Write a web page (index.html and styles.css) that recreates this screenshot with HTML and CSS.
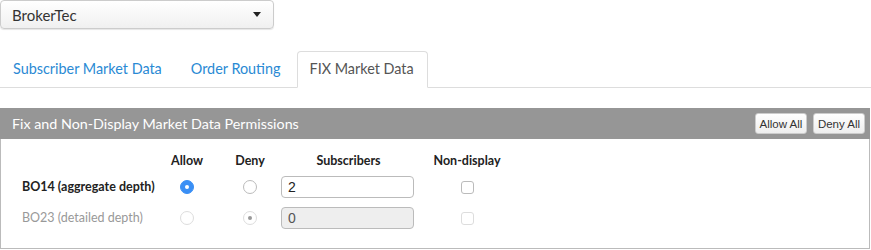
FILE: index.html
```html
<!DOCTYPE html>
<html lang="en">
<head>
    <meta charset="UTF-8">
    <title>Market Data Permissions</title>
    <link rel="stylesheet" href="styles.css">
</head>
<body>
    <div class="picker">
        <span>BrokerTec</span>
        <span class="caret"></span>
    </div>

    <ul class="tabs">
        <li><a href="#">Subscriber Market Data</a></li>
        <li><a href="#">Order Routing</a></li>
        <li class="active"><a href="#">FIX Market Data</a></li>
    </ul>

    <div class="panel">
        <div class="panel-head">
            <span>Fix and Non-Display Market Data Permissions</span>
            <div class="actions">
                <button>Allow All</button>
                <button>Deny All</button>
            </div>
        </div>
        <div class="perms">
            <div class="row head">
                <div class="name"></div>
                <div>Allow</div>
                <div>Deny</div>
                <div>Subscribers</div>
                <div>Non-display</div>
            </div>
            <div class="row">
                <div class="name strong">BO14 (aggregate depth)</div>
                <div><span class="radio on"></span></div>
                <div><span class="radio"></span></div>
                <div><input class="subs" type="text" value="2"></div>
                <div><span class="check"></span></div>
            </div>
            <div class="row disabled">
                <div class="name">BO23 (detailed depth)</div>
                <div><span class="radio"></span></div>
                <div><span class="radio dot"></span></div>
                <div><input class="subs" type="text" value="0" disabled></div>
                <div><span class="check"></span></div>
            </div>
        </div>
    </div>
</body>
</html>
```

FILE: styles.css
```css
body {
    margin: 0;
    font-family: 'Lato', 'Noto Sans', sans-serif;
    color: #333;
    background: #fff;
}
.picker {
    width: 274px;
    height: 29px;
    box-sizing: border-box;
    border: 1px solid #ccc;
    border-radius: 4px;
    background: linear-gradient(#fff, #f0f0f0);
    box-shadow: 0 1px 1px rgba(0, 0, 0, 0.1);
    display: flex;
    align-items: center;
    justify-content: space-between;
    padding: 0 10px 0 11px;
    font-size: 15px;
    color: #333;
}
.caret {
    width: 0;
    height: 0;
    border-left: 4px solid transparent;
    border-right: 4px solid transparent;
    border-top: 5px solid #222;
    margin-right: 2px;
}
.tabs {
    list-style: none;
    margin: 22px 0 0;
    padding: 0;
    display: flex;
    border-bottom: 1px solid #ddd;
    height: 36px;
}
.tabs li {
    margin-right: 2px;
}
.tabs a {
    display: block;
    height: 36px;
    box-sizing: border-box;
    padding: 8px 13px 0 12px;
    font-size: 14.4px;
    color: #2a8ad4;
    text-decoration: none;
    border: 1px solid transparent;
    border-radius: 4px 4px 0 0;
}
.tabs .active a {
    color: #555;
    background: #fff;
    border-color: #ddd;
    border-bottom-color: #fff;
    height: 37px;
}
.panel {
    margin-top: 20px;
    width: 870px;
    height: 141px;
    box-sizing: border-box;
    border: 1px solid #bbb;
    border-top: 0;
}
.panel-head {
    background: #969696;
    height: 31px;
    margin: 0 -1px;
    display: flex;
    align-items: center;
    justify-content: space-between;
    padding: 0 5px 0 12px;
    color: #fff;
    font-size: 14.3px;
}
.actions {
    display: flex;
    gap: 6px;
}
.actions button {
    font-family: 'Liberation Sans', Arial, sans-serif;
    font-size: 11.5px;
    color: #333;
    width: 52px;
    height: 21px;
    padding: 0;
    border: 1px solid #ccc;
    border-radius: 3px;
    background: linear-gradient(#fff, #eee);
}
.perms {
    margin-top: 11px;
    font-size: 12.5px;
}
.row {
    display: grid;
    grid-template-columns: 155px 62px 64px 133px 104px;
    align-items: center;
    height: 31px;
}
.row > div {
    text-align: center;
}
.row.head {
    height: 21px;
    font-weight: bold;
    color: #222;
}
.row .name {
    padding-left: 21px;
    text-align: left;
    white-space: nowrap;
}
.strong {
    font-weight: bold;
    color: #222;
}
.disabled .name {
    color: #999;
}
.radio {
    display: inline-block;
    width: 12px;
    height: 12px;
    border: 1px solid #bbb;
    border-radius: 50%;
    vertical-align: middle;
    position: relative;
}
.radio.on {
    background: #3a8ff5;
    border-color: #3a8ff5;
}
.radio.on::after,
.radio.dot::after {
    content: '';
    position: absolute;
    left: 4px;
    top: 4px;
    width: 4px;
    height: 4px;
    border-radius: 50%;
    background: #fff;
}
.radio.dot::after {
    background: #999;
}
.disabled .radio {
    border-color: #ddd;
}
.subs {
    display: block;
    width: 133px;
    height: 22px;
    box-sizing: border-box;
    margin-left: -1px;
    border: 1px solid #bbb;
    border-radius: 4px;
    padding: 0 6px;
    font-family: 'Liberation Sans', Arial, sans-serif;
    font-size: 14px;
    color: #222;
    background: #fff;
}
.subs:disabled {
    background: #eee;
    color: #555;
}
.check {
    display: inline-block;
    width: 11px;
    height: 11px;
    border: 1px solid #bbb;
    border-radius: 3px;
    vertical-align: middle;
}
.disabled .check {
    border-color: #ddd;
}
```
